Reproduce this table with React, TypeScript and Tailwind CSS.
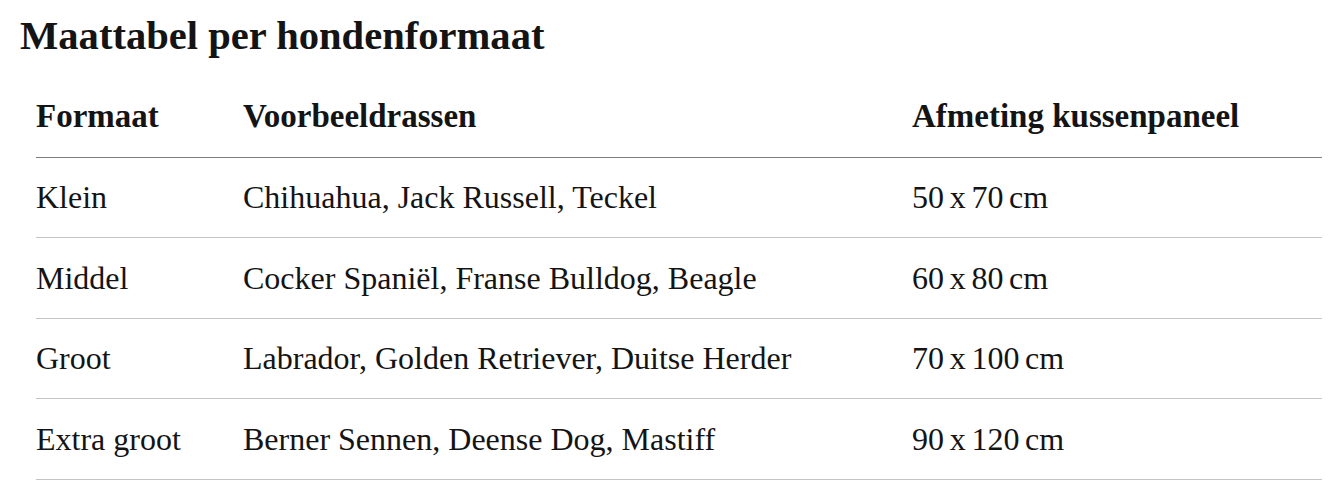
import React from "react";

const rows = [
  { size: "Klein", breeds: "Chihuahua, Jack Russell, Teckel", dims: "50 x 70 cm" },
  { size: "Middel", breeds: "Cocker Spaniël, Franse Bulldog, Beagle", dims: "60 x 80 cm" },
  { size: "Groot", breeds: "Labrador, Golden Retriever, Duitse Herder", dims: "70 x 100 cm" },
  { size: "Extra groot", breeds: "Berner Sennen, Deense Dog, Mastiff", dims: "90 x 120 cm" },
];

export default function App() {
  return (
    <div className="min-h-screen bg-white text-[#141414] font-['Liberation_Serif',serif] px-5 pt-3">
      <h1 className="text-[40.6px] leading-[48px] font-bold">
        Maattabel per hondenformaat
      </h1>

      <div className="ml-4 mt-[17px] w-[1286px]">
        {/* header */}
        <div className="grid grid-cols-[207px_669px_410px] h-[80.5px] items-center border-b border-[#7d7d7d] text-[33px] font-bold">
          <div>Formaat</div>
          <div>Voorbeeldrassen</div>
          <div>Afmeting kussenpaneel</div>
        </div>

        {rows.map((r) => (
          <div
            key={r.size}
            className="grid grid-cols-[207px_669px_410px] h-[80.5px] items-center border-b border-[#c4c4c4] text-[32px]"
          >
            <div>{r.size}</div>
            <div>{r.breeds}</div>
            <div className="[word-spacing:-2.3px]">{r.dims}</div>
          </div>
        ))}
      </div>
    </div>
  );
}
